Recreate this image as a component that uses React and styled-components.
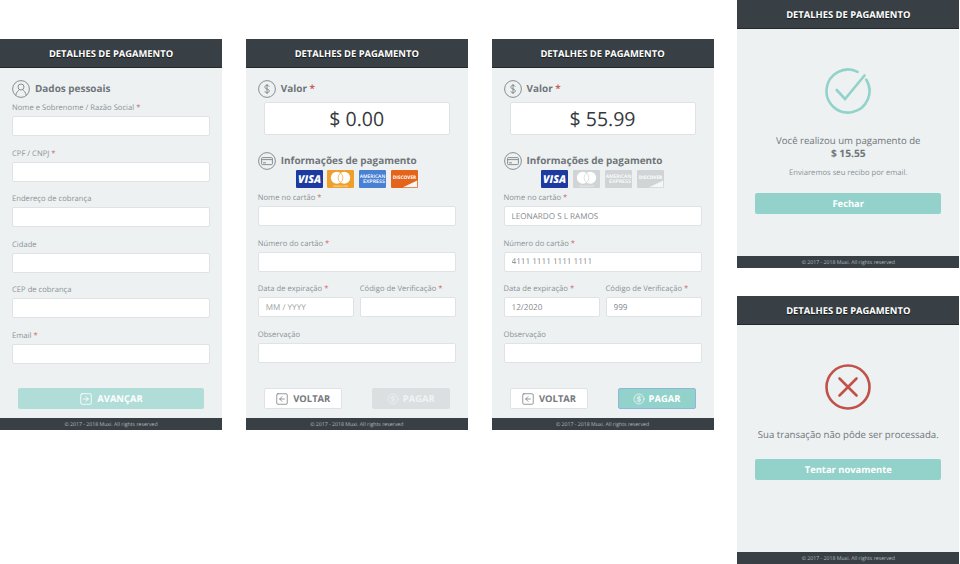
import React from 'react'
import styled, { createGlobalStyle } from 'styled-components'
import { SquareArrowRight, SquareArrowLeft, CircleDollarSign } from 'lucide-react'

const GlobalStyle = createGlobalStyle`
  html, body {
    margin: 0;
    padding: 0;
    background: #fff;
  }
  body {
    font-family: "Open Sans", "Liberation Sans", sans-serif;
    text-rendering: geometricPrecision;
    overflow: hidden;
  }
  * {
    box-sizing: border-box;
  }
`

const Page = styled.div`
  display: flex;
  gap: 23.75px;
  width: 960px;
  height: 564px;
`

const Column = styled.div`
  width: 222px;
  flex: none;
  display: flex;
  flex-direction: column;
  gap: 28px;
  padding-top: ${props => (props.$offset ? '39px' : '0')};
  height: ${props => (props.$offset ? '430px' : '564px')};
`

const Panel = styled.section`
  flex: 1;
  display: flex;
  flex-direction: column;
  background: #edf1f2;
`

const Header = styled.header`
  height: 29px;
  flex: none;
  background: #394045;
  border-bottom: 1px solid #23282b;
  color: #fff;
  font-size: 9.4px;
  font-weight: 700;
  line-height: 30px;
  text-align: center;
  text-shadow: 0 1px 1px #15181a;
`

const Footer = styled.footer`
  height: 12px;
  flex: none;
  background: #394045;
  color: #b4babd;
  font-size: 5.2px;
  line-height: 12px;
  text-align: center;
`

const Body = styled.div`
  flex: 1;
  display: flex;
  flex-direction: column;
  padding: 12px 12px 9px;
`

const Section = styled.div`
  display: flex;
  align-items: center;
  gap: 5px;
  height: 18px;
  margin-bottom: ${props => (props.$tight ? '0' : '4px')};
  color: #6f7579;
  font-size: 9.95px;
  font-weight: 700;
`

const SectionTitle = styled.span`
  padding-bottom: 2px;
`

const Required = styled.span`
  color: #c9605a;
`

const Form = styled.div`
  display: flex;
  flex-direction: column;
  gap: 11.6px;
`

const Field = styled.label`
  display: block;
  flex: 1;
  min-width: 0;
`

const Label = styled.div`
  height: 10px;
  margin-bottom: 4px;
  color: #8b9195;
  font-size: 7.65px;
  line-height: 13px;
  white-space: nowrap;
`

const Input = styled.input`
  display: block;
  width: 100%;
  height: 20px;
  padding: 0 7px;
  background: #fff;
  border: 1px solid #dfe3e5;
  border-radius: 2px;
  outline: none;
  color: #83898d;
  font-family: inherit;
  font-size: 8.15px;
  text-rendering: geometricPrecision;
  &::placeholder {
    color: #9a9fa3;
    opacity: 1;
  }
`

const Row = styled.div`
  display: flex;
  gap: 6px;
`

const Amount = styled.div`
  height: 33px;
  margin: 0 6px 17px;
  background: #fff;
  border: 1px solid #dfe3e5;
  border-radius: 2px;
  color: #34393c;
  font-size: 19.5px;
  line-height: 32px;
  text-align: center;
`

const Cards = styled.div`
  display: flex;
  justify-content: center;
  gap: 4.7px;
  height: 18px;
  margin-bottom: 4px;
`

const Actions = styled.div`
  display: flex;
  justify-content: space-between;
  margin: auto 6px 0;
`

const Button = styled.button`
  width: ${props => (props.$wide ? '100%' : '78px')};
  height: 21px;
  display: flex;
  align-items: center;
  justify-content: center;
  gap: 4px;
  padding: 0;
  border: 1px solid ${props => props.$border || 'transparent'};
  border-radius: 2px;
  background: ${props => props.$bg || '#92d2cb'};
  color: ${props => props.$color || '#fff'};
  font-family: inherit;
  font-size: 9.4px;
  font-weight: 700;
  text-rendering: geometricPrecision;
`

const Message = styled.div`
  flex: 1;
  display: flex;
  flex-direction: column;
  align-items: center;
  padding: 39px 18px 0;
`

const Lead = styled.p`
  margin: ${props => props.$top} 0 ${props => props.$bottom || '0'};
  color: #6f7579;
  font-size: 9.62px;
  font-weight: 500;
  line-height: 13px;
  text-align: center;
  white-space: nowrap;
`

const Total = styled.strong`
  display: block;
  font-size: 10.2px;
  font-weight: 700;
`

const Note = styled.p`
  margin: 8px 0 14px;
  color: #8b9195;
  font-size: 7.65px;
  line-height: 11px;
`

const CardSvg = styled.svg`
  display: block;
`

const CardText = styled.text`
  font-family: "Open Sans", "Liberation Sans", sans-serif;
  fill: #fff;
`

const MUTED = '#d0d4d6'

function VisaCard() {
  return (
    <CardSvg width="27" height="18" viewBox="0 0 27 18">
      <rect width="27" height="18" rx="1" fill="#1c3aa0" />
      <CardText x="13.5" y="13.2" fontSize="11" fontWeight="800" fontStyle="italic" textAnchor="middle" textLength="23" lengthAdjust="spacingAndGlyphs">VISA</CardText>
    </CardSvg>
  )
}

function MasterCard(props) {
  const bg = props.muted ? MUTED : '#ee9f2c'
  return (
    <CardSvg width="27" height="18" viewBox="0 0 27 18">
      <rect width="27" height="18" rx="1" fill={bg} />
      <circle cx="9.800" cy="7.800" r="6" fill="#fff" />
      <circle cx="17.200" cy="7.800" r="6" fill="#fff" />
      <path d="M13.500 3a6 6 0 0 1 0 9.600a6 6 0 0 1 0-9.600z" fill="none" stroke={bg} strokeWidth="0.7" />
      <CardText x="13.5" y="16.6" fontSize="2.6" textAnchor="middle">MasterCard</CardText>
    </CardSvg>
  )
}

function AmexCard(props) {
  return (
    <CardSvg width="27" height="18" viewBox="0 0 27 18">
      <rect width="27" height="18" rx="1" fill={props.muted ? MUTED : '#4a80d4'} />
      <CardText x="13.5" y="7.700" fontSize="4.8" fontWeight="600" textAnchor="middle" textLength="25.500" lengthAdjust="spacingAndGlyphs">AMERICAN</CardText>
      <CardText x="15" y="13.200" fontSize="4.8" fontWeight="600" textAnchor="middle" textLength="22" lengthAdjust="spacingAndGlyphs">EXPRESS</CardText>
    </CardSvg>
  )
}

function DiscoverCard(props) {
  return (
    <CardSvg width="27" height="18" viewBox="0 0 27 18">
      <rect width="27" height="18" rx="1" fill={props.muted ? MUTED : '#e4641c'} />
      <path d="M12 17.200L26.200 10.500V17.200z" fill="#f5f6f6" />
      <CardText x="13.5" y="9" fontSize="4.8" fontWeight="700" textAnchor="middle" textLength="23.500" lengthAdjust="spacingAndGlyphs">DISCOVER</CardText>
    </CardSvg>
  )
}

function CardList(props) {
  return (
    <Cards>
      <VisaCard />
      <MasterCard muted={props.onlyVisa} />
      <AmexCard muted={props.onlyVisa} />
      <DiscoverCard muted={props.onlyVisa} />
    </Cards>
  )
}

function PersonIcon() {
  return (
    <svg width="18" height="18" viewBox="0 0 18 18" fill="none" stroke="#7d8387" strokeWidth="0.9">
      <circle cx="9" cy="9" r="8.4" />
      <circle cx="9" cy="7" r="3" />
      <path d="M3.800 15.200c.5-3 2.400-4.600 3.400-5M14.200 15.200c-.5-3-2.400-4.600-3.400-5" />
    </svg>
  )
}

function DollarIcon() {
  return (
    <svg width="18" height="18" viewBox="0 0 18 18" fill="none" stroke="#7d8387" strokeWidth="0.9">
      <circle cx="9" cy="9" r="8.4" />
      <path d="M11.200 6.600C10.900 5.700 10 5.300 9 5.300c-1.200 0-2.200.6-2.200 1.800 0 2.500 4.500 1.300 4.500 3.800 0 1.200-1.100 1.800-2.300 1.800-1.100 0-2-.5-2.300-1.500M9 4v10" />
    </svg>
  )
}

function CardIcon() {
  return (
    <svg width="18" height="18" viewBox="0 0 18 18" fill="none" stroke="#7d8387" strokeWidth="0.9">
      <circle cx="9" cy="9" r="8.4" />
      <rect x="3.600" y="5.600" width="10.800" height="7" rx="0.8" />
      <path d="M3.600 7.600h10.800" />
      <path d="M5 10.800h3" />
    </svg>
  )
}

function CheckIcon() {
  return (
    <svg width="46" height="46" viewBox="0 0 46 46" fill="none" stroke="#92d2cb" strokeWidth="2.6" strokeLinecap="round">
      <path d="M41.200 11.600A21.500 21.500 0 1 1 32.600 3.800" />
      <path d="M11.700 22l8.300 9L39.500 7.500" />
    </svg>
  )
}

function ErrorIcon() {
  return (
    <svg width="46" height="46" viewBox="0 0 46 46" fill="none" stroke="#c0524a" strokeWidth="2.6" strokeLinecap="round">
      <circle cx="23" cy="23" r="21.500" />
      <path d="M14.500 14.500l17 17M31.500 14.500l-17 17" />
    </svg>
  )
}

function Title() {
  return <Header>DETALHES DE PAGAMENTO</Header>
}

function Copyright() {
  return <Footer>© 2017 - 2018 Muxi. All rights reserved</Footer>
}

function TextField(props) {
  return (
    <Field>
      <Label>
        {props.label}
        {props.required && <Required> *</Required>}
      </Label>
      <Input readOnly value={props.value || ''} placeholder={props.placeholder} />
    </Field>
  )
}

function PersonalStep() {
  return (
    <Panel>
      <Title />
      <Body>
        <Section>
          <PersonIcon />
          <SectionTitle>Dados pessoais</SectionTitle>
        </Section>
        <Form>
          <TextField label="Nome e Sobrenome / Razão Social" required />
          <TextField label="CPF / CNPJ" required />
          <TextField label="Endereço de cobrança" />
          <TextField label="Cidade" />
          <TextField label="CEP de cobrança" />
          <TextField label="Email" required />
        </Form>
        <Actions>
          <Button $wide $bg="#b0ddd8">
            <SquareArrowRight size={14} strokeWidth={1.5} />
            AVANÇAR
          </Button>
        </Actions>
      </Body>
      <Copyright />
    </Panel>
  )
}

function PaymentStep(props) {
  return (
    <Panel>
      <Title />
      <Body>
        <Section>
          <DollarIcon />
          <SectionTitle>Valor <Required>*</Required></SectionTitle>
        </Section>
        <Amount>$ {props.amount}</Amount>
        <Section $tight>
          <CardIcon />
          <SectionTitle>Informações de pagamento</SectionTitle>
        </Section>
        <CardList onlyVisa={props.filled} />
        <Form>
          <TextField label="Nome no cartão" required value={props.filled && 'LEONARDO S L RAMOS'} />
          <TextField label="Número do cartão" required value={props.filled && '4111 1111 1111 1111'} />
          <Row>
            <TextField label="Data de expiração" required placeholder="MM / YYYY" value={props.filled && '12/2020'} />
            <TextField label="Código de Verificação" required value={props.filled && '999'} />
          </Row>
          <TextField label="Observação" />
        </Form>
        <Actions>
          <Button $bg="#fff" $color="#74797d" $border="#dfe3e5">
            <SquareArrowLeft size={14} strokeWidth={1.3} />
            VOLTAR
          </Button>
          {props.filled ? (
            <Button $border="#8fb6dc">
              <CircleDollarSign size={12} strokeWidth={1.3} />
              PAGAR
            </Button>
          ) : (
            <Button $bg="#dcdfe1" $color="#f1f3f4">
              <CircleDollarSign size={12} strokeWidth={1.3} />
              PAGAR
            </Button>
          )}
        </Actions>
      </Body>
      <Copyright />
    </Panel>
  )
}

export default function App() {
  return (
    <Page>
      <GlobalStyle />
      <Column $offset>
        <PersonalStep />
      </Column>
      <Column $offset>
        <PaymentStep amount="0.00" />
      </Column>
      <Column $offset>
        <PaymentStep amount="55.99" filled />
      </Column>
      <Column>
        <Panel>
          <Title />
          <Message>
            <CheckIcon />
            <Lead $top="19.5px">
              Você realizou um pagamento de
              <Total>$ 15.55</Total>
            </Lead>
            <Note>Enviaremos seu recibo por email.</Note>
            <Button $wide>Fechar</Button>
          </Message>
          <Copyright />
        </Panel>
        <Panel>
          <Title />
          <Message>
            <ErrorIcon />
            <Lead $top="18px" $bottom="18px">Sua transação não pôde ser processada.</Lead>
            <Button $wide>Tentar novamente</Button>
          </Message>
          <Copyright />
        </Panel>
      </Column>
    </Page>
  )
}
